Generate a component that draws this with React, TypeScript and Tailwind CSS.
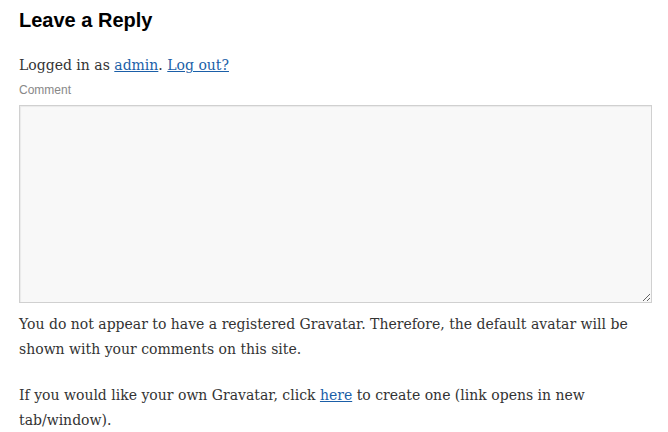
const serif = "font-['Georgia','DejaVu_Serif',serif]";

export default function App() {
	return (
		<div className="w-[668px] h-[432px] bg-white overflow-hidden pl-[19px] pr-[16px] pt-[6px]">
			<h3 className="font-['Liberation_Sans',Arial,sans-serif] font-bold text-[20px] leading-[28px] text-black">
				Leave a Reply
			</h3>
			<p className={`${serif} text-[14px] leading-[24px] text-[#333] mt-[19px]`}>
				Logged in as{" "}
				<a href="#" className="text-[#1b5fa8] underline">
					admin
				</a>
				.{" "}
				<a href="#" className="text-[#1b5fa8] underline">
					Log out?
				</a>
			</p>
			<label className="block font-['Liberation_Sans',Arial,sans-serif] text-[12px] leading-[16px] text-[#888] mt-[5px]">
				Comment
			</label>
			<textarea className="block mt-[7px] w-[633px] h-[198px] bg-[#f8f8f8] border border-[#d0d0d0] shadow-[inset_1px_1px_1px_rgba(0,0,0,0.06)] resize-y outline-none" />
			<p className={`${serif} text-[14px] leading-[25px] text-[#333] mt-[9px]`}>
				You do not appear to have a registered Gravatar. Therefore, the default avatar will be shown with
				your comments on this site.
			</p>
			<p className={`${serif} text-[14px] leading-[25px] text-[#333] mt-[21px]`}>
				If you would like your own Gravatar, click{" "}
				<a href="#" className="text-[#1b5fa8] underline">
					here
				</a>{" "}
				to create one (link opens in new tab/window).
			</p>
		</div>
	);
}
